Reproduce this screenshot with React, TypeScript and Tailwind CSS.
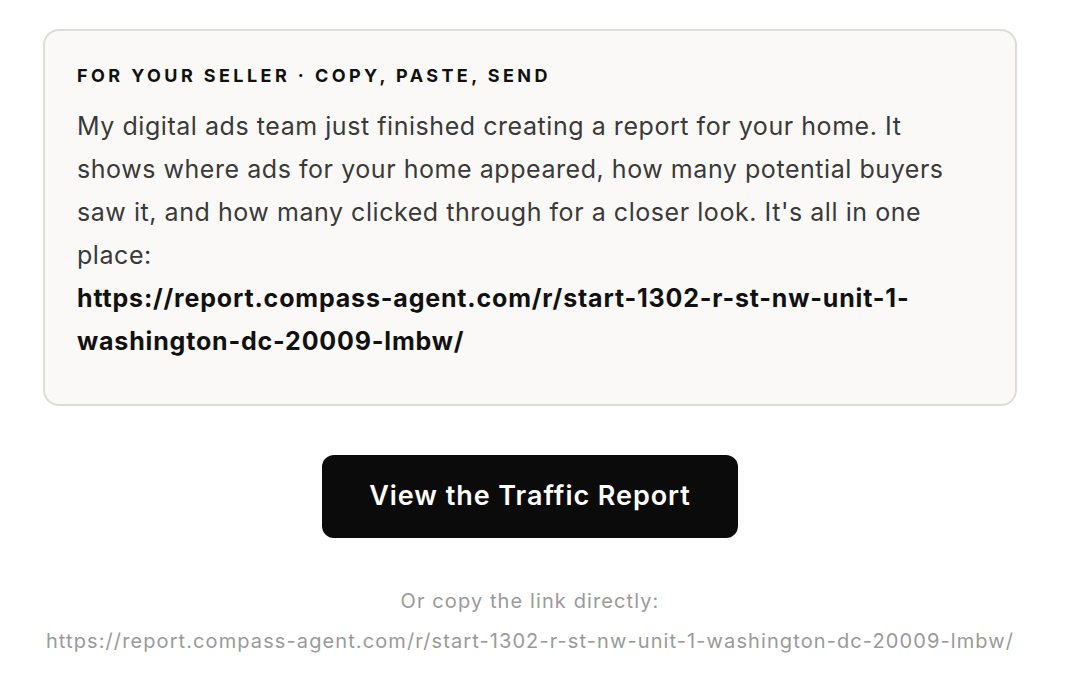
export default function App() {
  const url = 'https://report.compass-agent.com/r/start-1302-r-st-nw-unit-1-washington-dc-20009-lmbw/';
  return (
    <div className="min-h-screen bg-white pl-[43px] pt-[29px] font-['Inter',sans-serif]">
      <div className="w-[974px]">
        <div className="rounded-[16px] border-2 border-[#dcdcd8] bg-[#faf9f7] pl-[32px] pr-[48px] pt-[33px] pb-[41px]">
          <div className="text-[18px] font-bold uppercase leading-[24px] tracking-[0.19em] text-[#111111]">
            For your seller · Copy, paste, send
          </div>
          <p className="mt-[17px] text-[25px] leading-[43px] tracking-[0.022em] text-[#3a3a3a]">
            My digital ads team just finished creating a report for your home. It shows where ads for your home
            appeared, how many potential buyers saw it, and how many clicked through for a closer look. It's all in
            one place:
            <br />
            <span className="font-bold break-words tracking-[0.033em] text-[#111111]">{url}</span>
          </p>
        </div>
        <div className="flex flex-col items-center">
          <button className="mt-[49px] h-[83px] w-[416px] rounded-[12px] bg-[#0b0b0b] text-[27px] font-semibold tracking-[0.035em] text-white">
            View the Traffic Report
          </button>
          <div className="mt-[43px] text-[20px] leading-[40px] tracking-[0.055em] text-[#9a9a9a]">
            Or copy the link directly:
          </div>
          <div className="whitespace-nowrap text-[20px] leading-[40px] tracking-[0.055em] text-[#9a9a9a]">{url}</div>
        </div>
      </div>
    </div>
  );
}
